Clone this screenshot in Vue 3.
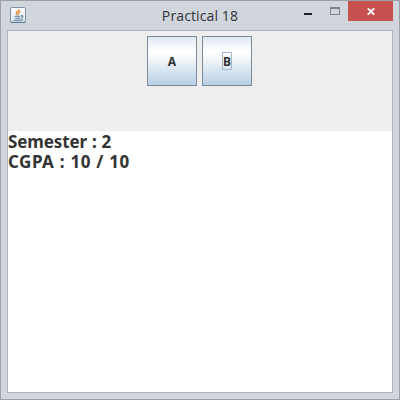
<script setup>
const buttons = [{ label: 'A', focused: false }, { label: 'B', focused: true }]
const lines = [
  { text: 'Semester : 2', kind: 'words' },
  { text: 'CGPA : 10 / 10', kind: 'figures' },
]
</script>

<template>
  <div class="window">
    <header class="titlebar">
      <svg class="app-icon" viewBox="0 0 16 16" width="16" height="16">
        <defs>
          <linearGradient id="iconBg" x1="0" y1="0" x2="0" y2="1">
            <stop offset="0" stop-color="#fff" />
            <stop offset="1" stop-color="#dce4ec" />
          </linearGradient>
        </defs>
        <rect x="0.5" y="0.5" width="15" height="15" rx="1.5" fill="url(#iconBg)" stroke="#7d92a6" />
        <path d="M0.8 15.4H15.2" stroke="#53718e" stroke-width="1" />
        <path d="M9 2.2C9.4 4 6 4.6 6.2 6.2C6.3 7 7 7.6 7.4 8.2M10.7 4.4C8.5 5.2 7.8 6 8.8 7.6" fill="none" stroke="#e08a3c" stroke-width="1.3" />
        <path d="M4.5 9.2H10.5M5.2 11.2H10M11 8.8C13.6 8.2 13.2 10.6 11 11.2M3.4 13.2H11.5L13 12.5" fill="none" stroke="#53789c" stroke-width="1.1" />
      </svg>
      <h1 class="title">Practical 18</h1>
      <div class="controls">
        <span class="minimize"></span>
        <span class="maximize"></span>
        <span class="close">
          <svg viewBox="0 0 8 7" width="8" height="7">
            <path d="M0.8 0.3L7.2 6.7M7.2 0.3L0.8 6.7" stroke="#fff" stroke-width="1.8" />
          </svg>
        </span>
      </div>
    </header>
    <main class="content">
      <div class="toolbar">
        <button v-for="b in buttons" :key="b.label" class="metal">
          <span class="caption" :class="{ focused: b.focused }">{{ b.label }}</span>
        </button>
      </div>
      <div class="output">
        <div v-for="line in lines" :key="line.text" class="line" :class="line.kind">{{ line.text }}</div>
      </div>
    </main>
  </div>
</template>

<style>
body { margin: 0; overflow: hidden; }
</style>

<style scoped>
.window {
  box-sizing: border-box;
  width: 400px;
  height: 400px;
  padding: 0 6px 6px;
  border: 1px solid #9b9fa6;
  background: #d1d5dc;
  display: flex;
  flex-direction: column;
}
.titlebar {
  height: 29px;
  flex: none;
  display: grid;
  grid-template-columns: 100px 1fr 100px;
  align-items: start;
}
.app-icon { margin: 6px 0 0 3px; display: block; }
.title {
  margin: 4px 0 0;
  font: 400 14px/22px "Open Sans", "Noto Sans", sans-serif;
  letter-spacing: 0.12px;
  color: #30343a;
  text-align: center;
  white-space: nowrap;
}
.controls { display: flex; justify-content: flex-end; align-items: flex-start; }
.minimize { width: 8px; height: 2px; margin: 12px 18px 0 0; background: #20222c; }
.maximize {
  box-sizing: border-box;
  width: 10px;
  height: 8px;
  margin: 6px 8px 0 0;
  border: 1px solid #7d818a;
  border-top-width: 2px;
}
.close {
  box-sizing: border-box;
  width: 45px;
  height: 20px;
  padding-top: 1px;
  background: #c75050;
  display: flex;
  align-items: center;
  justify-content: center;
}
.content {
  flex: 1;
  border: 1px solid #adb4bb;
  background: #fff;
  display: flex;
  flex-direction: column;
}
.toolbar {
  box-sizing: border-box;
  height: 100px;
  padding: 5px 2px 0 0;
  background: #eee;
  display: flex;
  justify-content: center;
  align-items: flex-start;
  gap: 5px;
}
.metal {
  width: 50px;
  height: 50px;
  padding: 0;
  border: 1px solid #7a8a99;
  background: linear-gradient(#dde8f3 0%, #fff 28%, #fff 34%, #b8cfe5 100%);
  display: flex;
  align-items: center;
  justify-content: center;
}
.caption {
  box-sizing: border-box;
  width: 10px;
  height: 18px;
  padding-left: 1px;
  font: 700 12px/17px "Noto Sans", sans-serif;
  color: #333;
  display: flex;
  justify-content: center;
  border: 1px solid transparent;
}
.focused { border-color: #a3b8cc; }
.output { flex: 1; padding-top: 1px; background: #fff; }
.line {
  height: 20px;
  font: 700 17px/20px "Noto Sans", sans-serif;
  color: #333;
  white-space: pre;
}
.words { letter-spacing: -0.12px; word-spacing: 0.7px; }
.figures { letter-spacing: 0.5px; word-spacing: 0.5px; }
</style>
